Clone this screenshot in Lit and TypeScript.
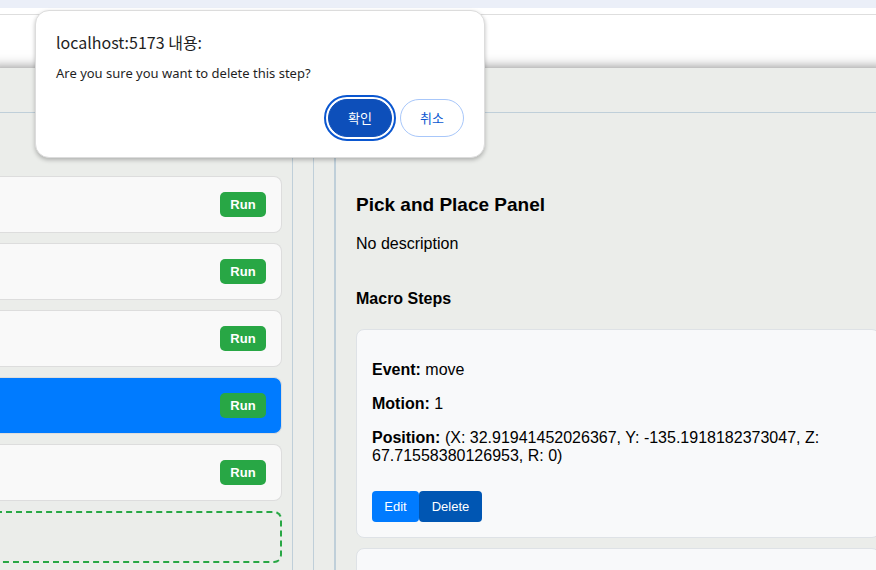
import { LitElement, html, css } from "lit";
import { customElement, state } from "lit/decorators.js";
import { classMap } from "lit/directives/class-map.js";

interface Step {
  event: string;
  motion: number;
  position: string;
}

@customElement("confirm-dialog")
class ConfirmDialog extends LitElement {
  static styles = css`
    :host {
      position: absolute;
      top: 10px;
      left: 35px;
      z-index: 2;
    }
    .dialog {
      position: static;
      box-sizing: border-box;
      width: 450px;
      margin: 0;
      padding: 20px;
      border: 1px solid #dcdcdc;
      border-radius: 14px;
      background: #fff;
      color: #1f1f1f;
      box-shadow: 0 2px 4px rgba(0, 0, 0, 0.25);
      font-family: "Noto Sans", "Noto Sans CJK KR", sans-serif;
    }
    .title {
      margin: 0;
      font-family: "Noto Sans CJK KR", sans-serif;
      font-size: 16px;
      font-weight: 400;
      line-height: 22px;
    }
    .message {
      margin: 10px 0 16px;
      font-size: 13px;
      line-height: 20px;
    }
    .actions {
      display: flex;
      justify-content: flex-end;
      gap: 8px;
    }
    .button {
      width: 64px;
      height: 38px;
      padding: 0;
      border: 1px solid #a8c7fa;
      border-radius: 19px;
      background: #fff;
      color: #0b57d0;
      font: 13px/20px "Noto Sans CJK KR", sans-serif;
    }
    .primary {
      border-color: #0d4fba;
      background: #0d4fba;
      color: #fff;
      outline: 2px solid #0b57d0;
      outline-offset: 2px;
    }
  `;

  render() {
    return html`
      <dialog class="dialog" open aria-labelledby="title">
        <h2 class="title" id="title">localhost:5173 내용:</h2>
        <p class="message">Are you sure you want to delete this step?</p>
        <div class="actions">
          <button class="button primary">확인</button>
          <button class="button">취소</button>
        </div>
      </dialog>
    `;
  }
}

@customElement("app-root")
class AppRoot extends LitElement {
  static styles = css`
    :host {
      display: flex;
      flex-direction: column;
      position: relative;
      height: 100vh;
      overflow: hidden;
      background: #fff;
      color: #000;
      font: 16px/18px "Liberation Sans", Arial, sans-serif;
    }
    .strip {
      flex: none;
      height: 8px;
      background: #ebeff8;
    }
    .toolbar {
      flex: none;
      height: 6px;
      border-bottom: 1px solid #dedede;
    }
    .header {
      flex: none;
      height: 53px;
    }
    .main {
      flex: 1;
      min-height: 0;
      display: grid;
      grid-template-columns: 314px minmax(0, 1fr);
      column-gap: 20px;
      margin: 0 -12px;
      padding: 44px 12px 0;
      background: #ebedea;
      box-shadow: 0 0 12px rgba(0, 0, 0, 0.5);
    }
    .sidebar {
      border: solid #bfcfd9;
      border-width: 1px 1px 0 0;
      padding-right: 20px;
    }
    .list {
      display: flex;
      flex-direction: column;
      gap: 10px;
      height: 100%;
      box-sizing: border-box;
      padding: 63px 10px 0 0;
      border-right: 1px solid #bfcfd9;
    }
    .macro {
      display: flex;
      justify-content: flex-end;
      padding: 15px;
      border: 1px solid #ddd;
      border-left: 0;
      border-radius: 0 8px 8px 0;
      background: #f9f9f9;
    }
    .macro.active {
      background: #007bff;
    }
    .run {
      width: 46px;
      height: 25px;
      padding: 0;
      border: 0;
      border-radius: 5px;
      background: #28a745;
      color: #fff;
      font: bold 13px/15px "Liberation Sans", Arial, sans-serif;
    }
    .dropzone {
      box-sizing: border-box;
      height: 52px;
      flex: none;
      margin-left: -12px;
      border: 2px dashed #28a745;
      border-radius: 8px;
    }
    .panel {
      border: solid #bfcfd9;
      border-width: 1px 0 0 2px;
      padding: 81px 0 0 20px;
      margin-right: -4px;
    }
    .name {
      margin: 0 0 19px;
      font-size: 19px;
      line-height: 22px;
    }
    .description {
      margin: 0;
    }
    .heading {
      margin: 37px 0 21px;
      font-size: 16px;
      line-height: 18px;
    }
    .steps {
      display: flex;
      flex-direction: column;
      gap: 10px;
    }
    .step {
      min-height: 177px;
      padding: 15px;
      border: 1px solid #dee2e6;
      border-radius: 8px;
      background: #f8f9fa;
    }
    .field {
      margin: 16px 0;
    }
    .actions {
      display: flex;
      margin-top: 26px;
    }
    .edit,
    .delete {
      width: 47px;
      height: 31px;
      padding: 0;
      border: 0;
      border-radius: 4px;
      background: #007bff;
      color: #fff;
      font: 13px/15px "Liberation Sans", Arial, sans-serif;
    }
    .delete {
      width: 63px;
      background: #0056b3;
    }
  `;

  @state() private selected = 3;
  private macros = [0, 1, 2, 3, 4];
  private steps: Step[] = [
    {
      event: "move",
      motion: 1,
      position: "(X: 32.91941452026367, Y: -135.1918182373047, Z: 67.71558380126953, R: 0)",
    },
  ];

  render() {
    return html`
      <div class="strip"></div>
      <div class="toolbar"></div>
      <header class="header"></header>
      <main class="main">
        <aside class="sidebar">
          <div class="list">
            ${this.macros.map(
              (i) => html`
                <div
                  class=${classMap({ macro: true, active: i === this.selected })}
                  @click=${() => (this.selected = i)}
                >
                  <button class="run">Run</button>
                </div>
              `
            )}
            <div class="dropzone"></div>
          </div>
        </aside>
        <section class="panel">
          <h3 class="name">Pick and Place Panel</h3>
          <p class="description">No description</p>
          <h4 class="heading">Macro Steps</h4>
          <div class="steps">
            ${this.steps.map(
              (s) => html`
                <article class="step">
                  <p class="field"><strong>Event:</strong> ${s.event}</p>
                  <p class="field"><strong>Motion:</strong> ${s.motion}</p>
                  <p class="field"><strong>Position:</strong> ${s.position}</p>
                  <div class="actions">
                    <button class="edit">Edit</button>
                    <button class="delete">Delete</button>
                  </div>
                </article>
              `
            )}
            <article class="step"></article>
          </div>
        </section>
      </main>
      <confirm-dialog></confirm-dialog>
    `;
  }
}
